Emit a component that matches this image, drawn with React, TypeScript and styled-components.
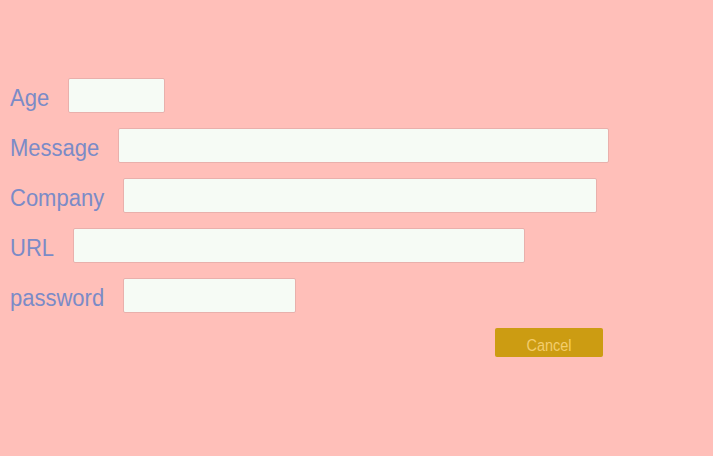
import React from "react";
import styled, { createGlobalStyle } from "styled-components";

const Global = createGlobalStyle`
  html, body { margin: 0; padding: 0; background: #ffbfb9; }
  body { font-family: "Liberation Sans", Arial, sans-serif; }
  * { box-sizing: border-box; }
`;

const Page = styled.div`
  width: 713px;
  height: 456px;
  background: #ffbfb9;
  padding: 78px 10px 0 10px;
  overflow: hidden;
`;

const Form = styled.form`
  display: flex;
  flex-direction: column;
  gap: 15px;
  width: 693px;
`;

const Row = styled.div`
  display: flex;
  align-items: center;
  height: 35px;
`;

const Label = styled.label`
  display: inline-block;
  font-size: 22px;
  line-height: 26px;
  color: #7b8bc7;
  margin-right: 19px;
  white-space: nowrap;
  transform: translateY(2px) scaleY(1.09);
`;

const Input = styled.input<{ $w: number }>`
  flex: 0 0 auto;
  width: ${(p) => p.$w}px;
  height: 35px;
  background: #f6fbf5;
  border: 1px solid #e9b0ac;
  border-radius: 2px;
  outline: none;
  padding: 0 6px;
  font-family: inherit;
  font-size: 16px;
`;

const Actions = styled.div`
  display: flex;
  justify-content: flex-end;
  width: 593px;
`;

const CancelButton = styled.button`
  width: 108px;
  height: 29px;
  background: #cc9c12;
  border: none;
  border-radius: 2px;
  padding: 0;
  cursor: pointer;
  display: flex;
  align-items: center;
  justify-content: center;
`;

const ButtonText = styled.span`
  display: inline-block;
  font-family: "Liberation Sans", Arial, sans-serif;
  font-size: 14.5px;
  color: #f3cd6c;
  transform: translateY(2px) scaleY(1.14);
`;

const fields = [
  { label: "Age", type: "number", w: 97 },
  { label: "Message", type: "text", w: 491 },
  { label: "Company", type: "text", w: 474 },
  { label: "URL", type: "url", w: 452 },
  { label: "password", type: "password", w: 173 },
];

export default function App() {
  return (
    <>
      <Global />
      <Page>
        <Form onSubmit={(e) => e.preventDefault()}>
          {fields.map((f) => (
            <Row key={f.label}>
              <Label htmlFor={f.label}>{f.label}</Label>
              <Input id={f.label} type={f.type} $w={f.w} />
            </Row>
          ))}
          <Actions>
            <CancelButton type="button">
              <ButtonText>Cancel</ButtonText>
            </CancelButton>
          </Actions>
        </Form>
      </Page>
    </>
  );
}
